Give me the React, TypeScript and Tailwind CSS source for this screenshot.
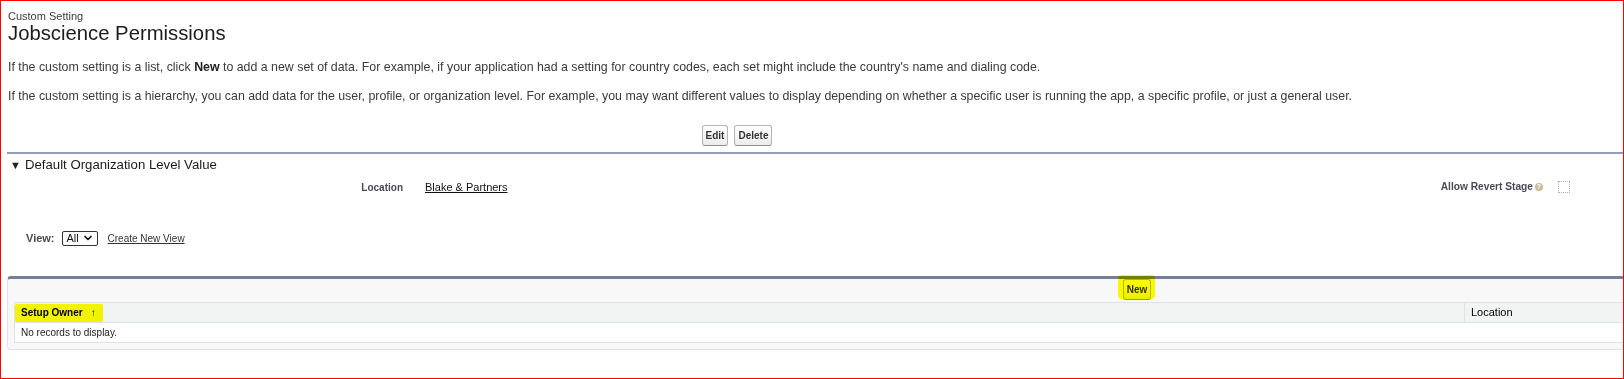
import { ChevronDown } from "lucide-react";

function Btn({ label, className = "" }: { label: string; className?: string }) {
  return (
    <button
      className={`h-[21px] px-[3px] rounded-[3px] border border-[#b5b5b5] border-b-[#8f8f8f] bg-gradient-to-b from-white to-[#ececec] text-[10px] font-bold text-[#333] leading-none ${className}`}
    >
      {label}
    </button>
  );
}

export default function App() {
  return (
    <div className="w-[1624px] h-[379px] border border-[#ff0000] bg-white overflow-hidden font-['Liberation_Sans',Arial,sans-serif]">
      <div className="w-[2260px] ml-[6px]">
        {/* Page title */}
        <div className="pt-[9px] pl-[1px]">
          <div className="text-[11px] leading-[12px] text-[#3c3c3c]">Custom Setting</div>
          <h1 className="text-[20.3px] leading-[22px] text-[#1c1c1c]">Jobscience Permissions</h1>
        </div>

        <p className="mt-[15px] pl-[1px] text-[12.37px] leading-[16px] text-[#3a3a3a]">
          If the custom setting is a list, click <b className="text-[#222]">New</b> to add a new set of data. For
          example, if your application had a setting for country codes, each set might include the country's name and
          dialing code.
        </p>
        <p className="mt-[13px] pl-[1px] text-[12.37px] leading-[16px] text-[#3a3a3a]">
          If the custom setting is a hierarchy, you can add data for the user, profile, or organization level. For
          example, you may want different values to display depending on whether a specific user is running the app, a
          specific profile, or just a general user.
        </p>

        {/* Buttons */}
        <div className="w-[1460px] flex justify-center gap-[6px] mt-[21px]">
          <Btn label="Edit" />
          <Btn label="Delete" />
        </div>

        <div className="h-[2px] bg-[#8e9dbe] mt-[6px]" />

        {/* Section */}
        <div className="flex items-center h-[16px] mt-[3px] text-[13.2px] leading-[16px] text-[#1a1a1a]">
          <span className="w-[18px] pl-[3px] text-[11px] text-[#222]">▼</span>
          <span>Default Organization Level Value</span>
        </div>

        <div className="flex items-center h-[14px] mt-[7px]">
          <div className="w-[406px] pr-[10px] text-right text-[10px] font-bold text-[#4a4a56]">Location</div>
          <div className="w-[734px] pl-[12px] text-[11px] text-[#111] underline">Blake &amp; Partners</div>
          <div className="w-[406px] pr-[10px] flex justify-end items-center gap-[2px] text-[10.2px] font-bold text-[#4a4a56]">
            <span>Allow Revert Stage</span>
            <span className="w-[8px] h-[8px] rounded-full bg-[#c9bb98] text-white text-[7px] leading-[8px] font-bold flex items-center justify-center">
              ?
            </span>
          </div>
          <div className="pl-[5px]">
            <div className="w-[12px] h-[12px] border border-dotted border-[#b0b0b0]" />
          </div>
        </div>

        {/* View */}
        <div className="flex items-center h-[16px] mt-[36px] pl-[19px]">
          <span className="text-[11px] font-bold text-[#4a4a56]">View:</span>
          <span className="ml-[7px] h-[15px] w-[36px] flex items-center justify-between pl-[4px] pr-[3px] border border-[#333] rounded-[2px] text-[11px] text-[#111]">
            All
            <ChevronDown size={12} strokeWidth={3.5} className="text-[#111]" />
          </span>
          <span className="ml-[10px] text-[10px] text-[#333] underline">Create New View</span>
        </div>

        {/* Related list panel */}
        <div className="mt-[30px] w-[2260px] border border-[#e0e3e5] border-t-[3px] border-t-[#747e96] rounded-[4px] bg-[#f8f8f8] pb-[6px]">
          <div className="flex justify-center pb-[2px]">
            <div className="relative flex">
              <Btn label="New" className="h-[20px] px-[3px]" />
              <span className="absolute left-[-5px] top-[-4px] w-[37px] h-[24px] rounded-[4px] bg-[#ffff00] mix-blend-multiply" />
            </div>
          </div>
          <div className="mx-[6px] border border-[#e0e3e5] bg-white">
            <div className="flex h-[20px] bg-[#f2f3f3] border-b border-[#e0e3e5] text-[#000]">
              <div className="relative w-[1449px] flex items-center pl-[6px] text-[10px] font-bold">
                <span>Setup Owner</span>
                <span className="ml-[8px] text-[10px] font-normal">↑</span>
                <span className="absolute left-0 top-[1px] w-[88px] h-[18px] rounded-[2px] bg-[#ffff00] mix-blend-multiply" />
              </div>
              <div className="flex items-center border-l border-[#e0e3e5] pl-[6px] text-[11px]">Location</div>
            </div>
            <div className="h-[19px] flex items-center pl-[6px] text-[10px] text-[#222]">No records to display.</div>
          </div>
        </div>
      </div>
    </div>
  );
}
